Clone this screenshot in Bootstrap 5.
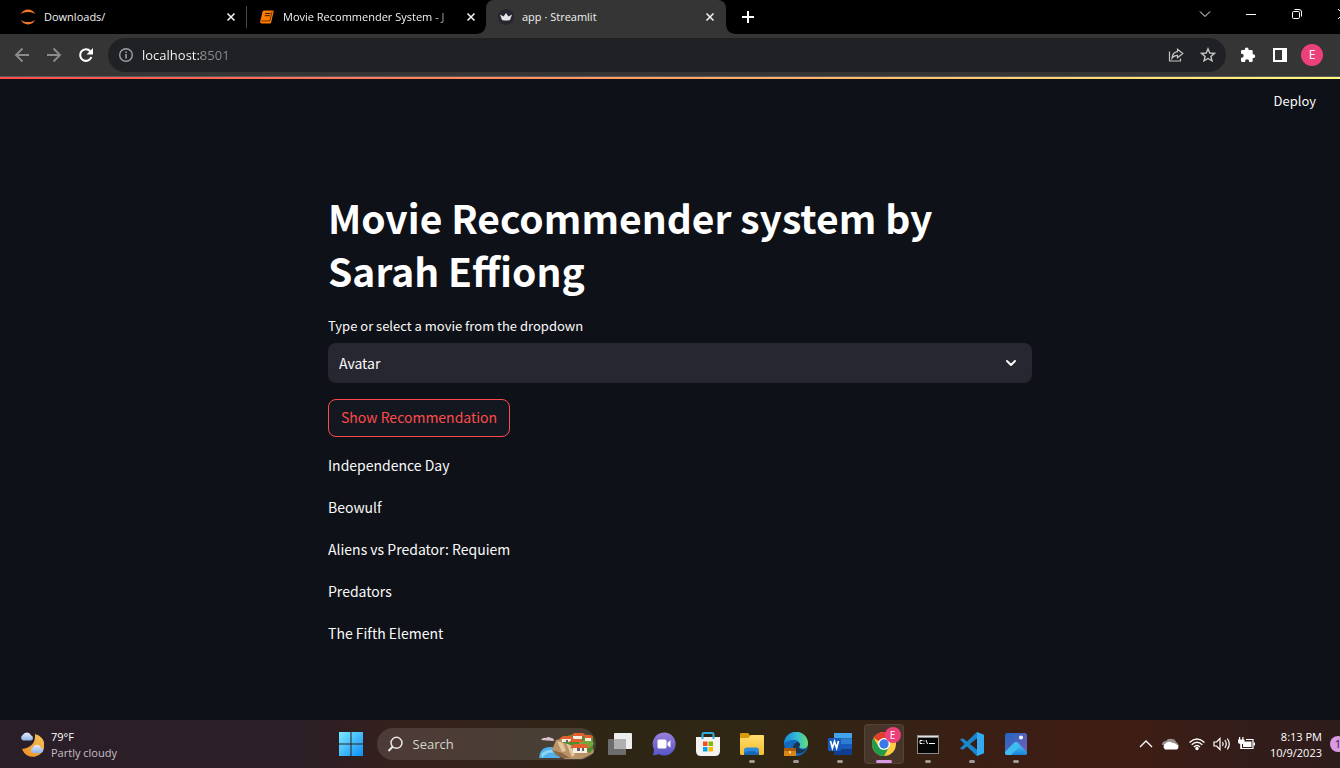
<!DOCTYPE html>
<html lang="en" data-bs-theme="dark">
<head>
<meta charset="utf-8">
<meta name="viewport" content="width=device-width, initial-scale=1">
<title>app · Streamlit</title>
<link href="https://cdn.jsdelivr.net/npm/bootstrap@5.3.0/dist/css/bootstrap.min.css" rel="stylesheet">
<style>
  body { background: #0e1117; overflow: hidden; font-family: "Open Sans", "Noto Sans", sans-serif; font-size: 12px; }
  svg { display: block; flex: none; }
  button { color: inherit; }
  /* the desktop runs slightly past the right edge of the viewport */
  .desktop { min-height: 100vh; margin-right: -26px; }

  /* browser tabs */
  .tabstrip { background: #000; height: 34px; padding-left: 8px; color: #f1f1f1; }
  .tab-item { width: 239px; padding: 0 7px 0 12px; gap: 8px; position: relative; }
  .tab-item.divided { border-right: 1px solid #4a4a4a; border-image: linear-gradient(transparent 7px, #4a4a4a 7px, #4a4a4a 27px, transparent 27px) 1; }
  .tab-item.current { background: #353535; border-radius: 8px 8px 0 0; width: 240px; padding-right: 8px; }
  .tab-item.current::before, .tab-item.current::after { content: ""; position: absolute; bottom: 0; width: 8px; height: 8px; }
  .tab-item.current::before { left: -8px; background: radial-gradient(circle at 0 0, transparent 7px, #353535 8px); }
  .tab-item.current::after { right: -8px; background: radial-gradient(circle at 100% 0, transparent 7px, #353535 8px); }
  .tab-name { color: inherit; text-decoration: none; font-size: 11px; line-height: 18px; overflow: hidden; white-space: nowrap; flex: 1 1 0; min-width: 0; }
  .tab-name.faded { -webkit-mask-image: linear-gradient(to right, #000 150px, transparent 176px); mask-image: linear-gradient(to right, #000 150px, transparent 176px); }
  .plain-btn { background: none; border: 0; padding: 0; display: flex; align-items: center; justify-content: center; flex: none; }
  .win-btn { width: 46px; height: 28px; }

  /* address bar */
  .toolbar { background: #353535; height: 43px; padding: 0 38px 0 6px; gap: 6px; border-bottom: 1px solid #59595b; }
  .nav-btn { width: 32px; height: 32px; }
  .omnibox { background: #202124; border-radius: 17px; height: 34px; padding: 0 2px 0 10px; gap: 8px; }
  .omnibox input { border: 0; outline: 0; padding: 0; font-size: 13px; line-height: 20px; min-width: 0; -webkit-text-fill-color: transparent; background: linear-gradient(to right, #fff 59px, #8b8d90 59px); -webkit-background-clip: text; background-clip: text; }
  .avatar { width: 22px; height: 22px; border-radius: 50%; background: #ec407a; color: #fff; font-size: 12px; }
  .rainbow { height: 2px; background: linear-gradient(90deg, #ff4b4b, #fffd80); }

  /* application */
  .app { font-family: "Noto Sans CJK SC", "Noto Sans", sans-serif; color: #fafafa; font-size: 14px; }
  .app-header { height: 44px; padding-right: 50px; }
  .app-header button { font-size: 13px; }
  .app-body { width: 704px; max-width: 100%; margin: 0 auto; padding-top: 68px; }
  .app-column { padding-right: 6px; }
  .app-body h1 { font-size: 39px; line-height: 53px; font-weight: 700; margin: 0 0 19px; }
  .app-body label { font-size: 13px; line-height: 20px; margin-bottom: 7px; display: block; }
  .form-select.movie-select { background-color: #262730; border: 0; border-radius: 8px; height: 40px; font-size: 14px; color: #fafafa; padding: 0 32px 0 11px; background-position: right 14px center; background-size: 14px 14px;
    background-image: url("data:image/svg+xml,%3csvg xmlns='http://www.w3.org/2000/svg' viewBox='0 0 14 14'%3e%3cpath fill='none' stroke='%23fafafa' stroke-width='2' stroke-linecap='round' stroke-linejoin='round' d='M3 5l4 4 4-4'/%3e%3c/svg%3e"); }
  .show-btn { --bs-btn-color: #ff4b4b; --bs-btn-border-color: #ff4b4b; --bs-btn-bg: #131720; --bs-btn-font-size: 14px; --bs-btn-border-radius: 8px; --bs-btn-hover-color: #ff4b4b; --bs-btn-hover-border-color: #ff4b4b; display: block; line-height: 24px; padding: 5px 12px 7px; margin: 16px 0 15px; }
  .app-body p { line-height: 26px; margin-bottom: 16px; }

  /* taskbar */
  .taskbar { display: grid; grid-template-columns: 1fr auto 1fr; height: 48px; color: #fff; font-size: 11px;
    background: linear-gradient(90deg, #2a1e28 0, #2c1e26 300px, #35201c 400px, #33241a 500px, #2e2615 620px, #302613 780px, #352215 880px, #3b1e14 1000px, #401d13 1120px, #351d19 1220px, #2d1c1c 1340px); }
  .weather { padding-left: 18px; gap: 7px; }
  .two-line { line-height: 16px; padding-top: 2px; }
  .weather .dim { color: #c6c0c5; }
  .search-pill { width: 219px; height: 32px; border-radius: 16px; background: rgba(255,255,255,.12); padding-left: 10px; margin: 0 4px 0 6px; overflow: hidden; gap: 9px; }
  .search-pill input { background: none; border: 0; outline: 0; padding: 1px 0 0; color: #d8d4d0; font-size: 13px; min-width: 0; width: 120px; }
  .search-pill input::placeholder { color: #d8d4d0; opacity: 1; }
  .task-btn { width: 40px; height: 40px; border-radius: 4px; position: relative; }
  .task-btn.running::after { content: ""; position: absolute; bottom: 1px; left: 17px; width: 6px; height: 3px; border-radius: 2px; background: #a09a94; }
  .task-btn.focused { background: rgba(255,255,255,.09); border: 1px solid rgba(255,255,255,.07); }
  .task-btn.focused::after { content: ""; position: absolute; bottom: 0; left: 11px; width: 16px; height: 3px; border-radius: 2px; background: #d99ae6; }
  .profile-dot { position: absolute; top: 2px; right: 2px; width: 16px; height: 16px; border-radius: 50%; background: #ec407a; font-size: 10px; line-height: 16px; text-align: center; color: #fff; }
  .tray { padding-right: 20px; }
  .clock { text-align: right; width: 64px; }
  .count-dot { width: 16px; height: 16px; border-radius: 50%; background: #d99ae6; color: #2b1b2e; line-height: 16px; text-align: center; margin-left: 8px; }
</style>
</head>
<body>
<div class="desktop d-flex flex-column">

  <nav class="tabstrip d-flex" aria-label="Tabs">
    <div class="tab-item divided d-flex align-items-center">
      <svg width="16" height="16" viewBox="0 0 16 16" fill="#f37726"><path d="M1 5.2C2 2.200 5 .6 8 .6s6 1.600 7 4.600C13.500 3.800 11 2.900 8 2.900S2.500 3.800 1 5.200z"/><path d="M1 10.800c1 3 4 4.600 7 4.600s6-1.600 7-4.600c-1.500 1.400-4 2.300-7 2.300s-5.500-.9-7-2.300z"/></svg>
      <a class="tab-name" href="#">Downloads/</a>
      <button class="plain-btn" aria-label="Close tab"><svg width="16" height="16" viewBox="0 0 16 16" stroke="#f1f1f1" stroke-width="1.600"><path d="M4.500 4.500l7 7m0-7l-7 7"/></svg></button>
    </div>
    <div class="tab-item d-flex align-items-center">
      <svg width="16" height="16" viewBox="0 0 16 16"><path d="M5 1.500h8.700q1.200 0 .9 1.200L12.300 13q-.3 1.500-1.600 1.500H2.600Q.8 14.500 1.200 12.500L3.500 2.700Q3.800 1.500 5 1.500z" fill="#ff7b00"/><path d="M6.300 4.500h5M5.800 6.700h5" stroke="#311700"/><path d="M2.600 11.900h8.200l2.300-9.400" stroke="#311700" stroke-width=".7" fill="none"/></svg>
      <a class="tab-name faded" href="#">Movie Recommender System - J</a>
      <button class="plain-btn" aria-label="Close tab"><svg width="16" height="16" viewBox="0 0 16 16" stroke="#f1f1f1" stroke-width="1.600"><path d="M4.500 4.500l7 7m0-7l-7 7"/></svg></button>
    </div>
    <div class="tab-item current d-flex align-items-center">
      <svg width="16" height="16" viewBox="0 0 16 16"><circle cx="8" cy="8" r="8" fill="#262730"/><path d="M2 5.500l3.500 2L8 4l2.500 3.500 3.500-2-2 5.500q-4 1-8 0z" fill="#e4e4e6"/></svg>
      <a class="tab-name" href="#" aria-current="page">app · Streamlit</a>
      <button class="plain-btn" aria-label="Close tab"><svg width="16" height="16" viewBox="0 0 16 16" stroke="#f1f1f1" stroke-width="1.600"><path d="M4.500 4.500l7 7m0-7l-7 7"/></svg></button>
    </div>
    <button class="plain-btn ms-3" aria-label="New tab"><svg width="12" height="12" viewBox="0 0 12 12" stroke="#fff" stroke-width="2"><path d="M6 0v12M0 6h12"/></svg></button>
    <div class="d-flex ms-auto">
      <button class="plain-btn win-btn" aria-label="Search tabs"><svg width="12" height="12" viewBox="0 0 12 12" fill="none" stroke="#fff"><path d="M1 3.500l5 5 5-5"/></svg></button>
      <button class="plain-btn win-btn" aria-label="Minimize"><svg width="10" height="10" viewBox="0 0 10 10"><path d="M0 5h10v1H0z" fill="#fff"/></svg></button>
      <button class="plain-btn win-btn" aria-label="Restore"><svg width="10" height="10" viewBox="0 0 10 10" fill="none" stroke="#fff"><rect x=".5" y="2.500" width="7" height="7" rx="1.200"/><path d="M2.500.5H7Q9.500.5 9.500 3v4.500"/></svg></button>
      <button class="plain-btn win-btn" aria-label="Close"><svg width="10" height="10" viewBox="0 0 10 10" stroke="#fff"><path d="M0 0l10 10M10 0L0 10"/></svg></button>
    </div>
  </nav>

  <div class="toolbar d-flex align-items-center">
    <div class="d-flex">
      <button class="plain-btn nav-btn" aria-label="Back"><svg width="16" height="16" viewBox="0 0 16 16" fill="none" stroke="#8b8b8b" stroke-width="1.900"><path d="M15 8H2M8.500 1.500L2 8l6.500 6.500"/></svg></button>
      <button class="plain-btn nav-btn" aria-label="Forward"><svg width="16" height="16" viewBox="0 0 16 16" fill="none" stroke="#8b8b8b" stroke-width="1.900"><path d="M1 8h13M7.500 1.500L14 8l-6.500 6.500"/></svg></button>
      <button class="plain-btn nav-btn" aria-label="Reload"><svg width="16" height="16" viewBox="0 0 16 16"><path d="M13.400 10A5.800 5.800 0 1 1 12.300 4.200" fill="none" stroke="#fff" stroke-width="2.100"/><path d="M15 1v6.500H8.500z" fill="#fff"/></svg></button>
    </div>
    <div class="omnibox d-flex align-items-center flex-grow-1">
      <svg width="16" height="16" viewBox="0 0 16 16"><circle cx="8" cy="8" r="6.300" fill="none" stroke="#9aa0a6" stroke-width="1.400"/><path d="M7.200 7h1.600v4.500H7.200zM7.200 4.400h1.600V6H7.200z" fill="#9aa0a6"/></svg>
      <input class="flex-grow-1" type="text" value="localhost:8501" aria-label="Address">
      <div class="d-flex">
        <button class="plain-btn nav-btn" aria-label="Share"><svg width="16" height="16" viewBox="0 0 16 16" fill="none" stroke="#c4c6c8" stroke-width="1.200"><path d="M1.500 4.500v9.500h11v-2.500"/><path d="M9.500 2.200L14.800 6.500 9.500 10.800V8.300Q6 8.300 4 11.200 4.500 5.200 9.500 4.700z"/></svg></button>
        <button class="plain-btn nav-btn" aria-label="Bookmark"><svg width="16" height="16" viewBox="0 0 16 16" fill="none" stroke="#c4c6c8" stroke-width="1.400"><path d="M8 1.800l1.800 4.200 4.600.4-3.500 3 1.100 4.500L8 11.500l-4 2.400 1.100-4.500-3.500-3L6.200 6z"/></svg></button>
      </div>
    </div>
    <div class="d-flex align-items-center">
      <button class="plain-btn nav-btn" aria-label="Extensions"><svg width="16" height="16" viewBox="0 0 16 16" fill="#fff"><path d="M13.300 7.300h-.6V4.200q0-1.200-1.200-1.200H8.600v-.7a1.900 1.900 0 0 0-3.800 0V3H2.200Q1 3 1 4.200v2.600h.7a2 2 0 0 1 0 4H1v2.900Q1 15 2.200 15h2.900v-.7a2 2 0 0 1 4 0v.7h2.400q1.200 0 1.200-1.200v-2.700h.6a1.900 1.900 0 0 0 0-3.800z"/></svg></button>
      <button class="plain-btn nav-btn" aria-label="Side panel"><svg width="14" height="14" viewBox="0 0 14 14"><path fill="#fff" fill-rule="evenodd" d="M0 0h14v14H0zM2 2v10h7V2z"/></svg></button>
      <button class="plain-btn nav-btn" aria-label="Profile"><span class="avatar d-flex align-items-center justify-content-center">E</span></button>
    </div>
  </div>

  <main class="app flex-grow-1">
    <div class="rainbow"></div>
    <header class="app-header d-flex align-items-center justify-content-end"><button class="plain-btn">Deploy</button></header>
    <div class="app-column">
      <div class="app-body">
        <h1>Movie Recommender system by Sarah Effiong</h1>
        <label for="movie">Type or select a movie from the dropdown</label>
        <select class="form-select movie-select" id="movie"><option>Avatar</option></select>
        <button class="btn show-btn" type="button">Show Recommendation</button>
        <p>Independence Day</p>
        <p>Beowulf</p>
        <p>Aliens vs Predator: Requiem</p>
        <p>Predators</p>
        <p>The Fifth Element</p>
      </div>
    </div>
  </main>

  <footer class="taskbar align-items-center">
    <div class="weather d-flex align-items-center">
      <svg width="26" height="26" viewBox="0 0 26 26"><defs><linearGradient id="moon" x1="1" y1="0" x2="0" y2="1"><stop offset="0" stop-color="#f2c75b"/><stop offset="1" stop-color="#f08a24"/></linearGradient><linearGradient id="cloud" x1="0" y1="0" x2="0" y2="1"><stop offset="0" stop-color="#e4effc"/><stop offset="1" stop-color="#8fb2ea"/></linearGradient></defs><path d="M17 3a11.500 11.500 0 1 1-13 15Q18 16 17 3z" fill="url(#moon)"/><path d="M5 9.500a3 3 0 0 1-.3-5.400 4.500 4.500 0 0 1 8.300.2 2.700 2.700 0 0 1 0 5.200z" fill="url(#cloud)"/><path d="M15 22a3 3 0 0 1-.3-5.500 4.500 4.500 0 0 1 8.300.2 2.700 2.700 0 0 1 0 5.300z" fill="url(#cloud)"/></svg>
      <div class="two-line"><div>79°F</div><div class="dim">Partly cloudy</div></div>
    </div>

    <div class="d-flex align-items-center">
      <button class="plain-btn task-btn" aria-label="Start"><svg width="24" height="24" viewBox="0 0 24 24"><defs><linearGradient id="win" x1="0" y1="0" x2="1" y2="1"><stop offset="0" stop-color="#7cebff"/><stop offset="1" stop-color="#0c8df5"/></linearGradient></defs><path d="M0 0h11.500v11.500H0zM12.500 0H24v11.500H12.500zM0 12.500h11.500V24H0zM12.500 12.500H24V24H12.500z" fill="url(#win)"/></svg></button>
      <div class="search-pill d-flex align-items-center">
        <svg width="17" height="17" viewBox="0 0 17 17" fill="none" stroke="#e8e6e4"><circle cx="9.500" cy="6.800" r="5.500" stroke-width="1.500"/><path d="M5.600 10.800L1.500 15" stroke-width="2"/></svg>
        <input type="search" placeholder="Search" aria-label="Search">
        <svg class="ms-auto" width="57" height="32" viewBox="0 0 57 32"><path d="M0 30Q1 18 13 19q6 2 8 11z" fill="#4fb0ea"/><path d="M2 26q6-5 13-4l2 3q-8-2-14 5z" fill="#8bd4f7"/><path d="M2 12q2-3 5-2 2-2 5 0 3 0 3 3z" fill="#d8c2cf"/><path d="M17 12l14-3 22 5 2 11-12 6H26L13 22z" fill="#b99267"/><path d="M18 13l6 2 3 8-4 1zM27 15l4 1 5 11-3 2z" fill="#e2c79d"/><path d="M13 22l10 3 8 5h-8l-6-3z" fill="#8a6a45"/><path d="M23 10q13-7 31-2v13l-3 4-14-6-14-5z" fill="#4f8d2f"/><path d="M40 14l12-4 3 6-5 4-10-2z" fill="#72a93a"/><path d="M23 11h9v3h-9zM34 8h9v3h-9zM34 19h14v6H34zM46 10h6v3h-6z" fill="#f6eee1"/><path d="M20 11l4-3h8l3 3zM32 8l3-3h9l3 3zM30 14l3-3h9l3 3zM31 20l4-4h12l4 4zM44 10l3-3h5l2 3z" fill="#e35f2d"/><path d="M38 20h3v3h-3zM43 20h2v3h-2zM27 12h2v2h-2z" fill="#655c6b"/></svg>
      </div>
      <div class="d-flex gap-1">
        <button class="plain-btn task-btn" aria-label="Task view"><svg width="24" height="22" viewBox="0 0 24 22"><rect x="6" y="0" width="18" height="16" rx="1" fill="#eee"/><rect x="0" y="6" width="18" height="16" rx="1" fill="#6d6d6d"/><path d="M6 6h12v10H6z" fill="#b0b0b0"/></svg></button>
        <button class="plain-btn task-btn" aria-label="Chat"><svg width="24" height="24" viewBox="0 0 24 24"><defs><linearGradient id="chat" x1="0" y1="0" x2="0" y2="1"><stop offset="0" stop-color="#9a80d8"/><stop offset="1" stop-color="#5656c8"/></linearGradient></defs><path d="M12 .5A11.500 11.500 0 1 1 7 22.300L1 23.500 2 17.500A11.500 11.500 0 0 1 12 .5z" fill="url(#chat)"/><rect x="5.500" y="7.500" width="9" height="9" rx="1.500" fill="#fff"/><path d="M15.500 10.800L18.500 8.300v7.400l-3-2.500z" fill="#fff"/></svg></button>
        <button class="plain-btn task-btn" aria-label="Store"><svg width="24" height="24" viewBox="0 0 24 24"><path d="M0 5h24v14q0 5-5 5H5q-5 0-5-5z" fill="#f5f3f2"/><path d="M6.500 7V2.500q0-1.500 1.500-1.500h8q1.500 0 1.500 1.500V7" fill="none" stroke="#2baee2" stroke-width="2"/><path fill="#f25022" d="M7 9.500h4.500V14H7z"/><path fill="#7fba00" d="M12.500 9.500H17V14h-4.500z"/><path fill="#00a4ef" d="M7 15h4.500v4.500H7z"/><path fill="#ffb900" d="M12.500 15H17v4.500h-4.500z"/></svg></button>
        <button class="plain-btn task-btn running" aria-label="File Explorer"><svg width="24" height="22" viewBox="0 0 24 22"><defs><linearGradient id="folder" x1="0" y1="0" x2="0" y2="1"><stop offset="0" stop-color="#ffdc70"/><stop offset="1" stop-color="#f8bd2c"/></linearGradient></defs><path d="M0 1q0-1 1-1h7l3 3h12v6H0z" fill="#d99a0a"/><path d="M0 5h8l3-3h12q1 0 1 1v17.500q0 1.500-1.500 1.500h-21Q0 22 0 20.500z" fill="url(#folder)"/><path d="M4 22v-4.500q0-3 3-3h9q3 0 3 3V22z" fill="#2b8ade"/><path d="M4 22v-2.500h15V22z" fill="#1769b5"/><path d="M7.500 19h8" stroke="#125293"/></svg></button>
        <button class="plain-btn task-btn running" aria-label="Edge"><svg width="24" height="25" viewBox="0 0 24 25"><defs><linearGradient id="edge" x1="0" y1="0" x2="1" y2="0"><stop offset="0" stop-color="#1686dc"/><stop offset=".55" stop-color="#35bdd7"/><stop offset="1" stop-color="#67df6b"/></linearGradient></defs><circle cx="12" cy="12" r="12" fill="#1469bd"/><path d="M0 12A12 12 0 0 1 24 11.500c0 3-2 5-5.500 5-3 0-4-1-3-2.500C17 11 14 8 10 8 5 8 1 10 0 12z" fill="url(#edge)"/><path d="M9 16q0-5 5-6 3 2 1.500 4c-1.500 3 2 4.500 7 2.500Q18 23 12 21q-3-2-3-5z" fill="#1b3550"/><path d="M0 16h12v8H0z" fill="#d98518"/><path d="M0 16h12v3H0z" fill="#a85b0c"/><path d="M5 19h2v2.500H5z" fill="#ffd36b"/></svg></button>
        <button class="plain-btn task-btn running" aria-label="Word"><svg width="24" height="22" viewBox="0 0 24 22"><path fill="#41a5ee" d="M6 0h18v5.500H6z"/><path fill="#2b7cd3" d="M6 5.500h18V11H6z"/><path fill="#185abd" d="M6 11h18v5.500H6z"/><path fill="#103f91" d="M6 16.500h18V22H6z"/><rect y="5" width="13" height="13" rx="1" fill="#185abd"/><path d="M2.500 8l1.900 7 2.100-6.500L8.600 15l1.900-7" fill="none" stroke="#fff" stroke-width="1.700"/></svg></button>
        <button class="plain-btn task-btn focused" aria-label="Chrome"><svg width="24" height="24" viewBox="0 0 24 24"><circle cx="12" cy="12" r="12" fill="#ffcd40"/><path d="M12 12L1.600 6A12 12 0 0 1 22.400 6H12z" fill="#e33b2e"/><path d="M1.600 6A12 12 0 0 0 12 24l5.200-9L12 12 6.800 15z" fill="#229b4b"/><circle cx="12" cy="12" r="6" fill="#fff"/><circle cx="12" cy="12" r="4.700" fill="#3b78e7"/></svg><span class="profile-dot">E</span></button>
        <button class="plain-btn task-btn running" aria-label="Command Prompt"><svg width="22" height="19" viewBox="0 0 22 19"><rect width="22" height="19" fill="#8c8c8c"/><path d="M1 3h20v15H1z" fill="#050505"/><path d="M1 1h20v1H1z" fill="#e0e0e0"/><path d="M5.500 5.500H3v3h2.500M7 5.500v1M7 8v1M9 5l1.500 4M12 8.500h6" stroke="#fff" fill="none"/></svg></button>
        <button class="plain-btn task-btn running" aria-label="Visual Studio Code"><svg width="24" height="24" viewBox="0 0 24 24"><path d="M17 0L7 9.500 2.700 6.200 0 7.500 4.500 12 0 16.500l2.700 1.300L7 14.500 17 24l1-5.500L10 12l8-6.500z" fill="#1b86cc"/><path d="M17 0l7 2.800v18.400L17 24z" fill="#35aaf0"/></svg></button>
        <button class="plain-btn task-btn running" aria-label="Photos"><svg width="22" height="22" viewBox="0 0 22 22"><defs><linearGradient id="sky" x1="0" y1="0" x2="1" y2="1"><stop offset="0" stop-color="#1e68c2"/><stop offset="1" stop-color="#7c5cb8"/></linearGradient><linearGradient id="hill" x1="0" y1="0" x2="0" y2="1"><stop offset="0" stop-color="#59cdf5"/><stop offset="1" stop-color="#1683dd"/></linearGradient></defs><rect width="22" height="22" rx="2" fill="url(#sky)"/><path d="M0 19l9-9q2-2 4 0l9 9v1q0 2-2 2H2q-2 0-2-2z" fill="url(#hill)"/><path d="M6 22l9-9-2-3q-2-2-4 0L0 19v1q0 2 2 2z" fill="#3fbcf0"/><circle cx="16" cy="4.500" r="2" fill="#fff"/></svg></button>
      </div>
    </div>

    <div class="tray d-flex align-items-center justify-content-end">
      <button class="plain-btn" aria-label="Hidden icons"><svg width="24" height="16" viewBox="0 0 24 16" fill="none" stroke="#fff" stroke-width="1.300"><path d="M6 11l6-6 6 6"/></svg></button>
      <svg width="26" height="16" viewBox="0 0 26 16"><path d="M4 9q0-4 4-4 2-3 6-2 3 0 4 3 2 1 3 4z" fill="#9a928f"/><path d="M7 13.500a3.500 3.500 0 0 1 .5-6 5 5 0 0 1 7-.5 4 4 0 0 1 4 1.500 2.700 2.700 0 0 1 .5 5z" fill="#fff"/></svg>
      <svg width="26" height="16" viewBox="0 0 26 16" fill="none" stroke="#fff" stroke-width="1.400"><path d="M5.500 6.500q7.500-7 15 0M7.700 8.800q5.300-5 10.600 0M10 11q3-2.800 6 0"/><circle cx="13" cy="12.500" r="1" fill="#fff"/></svg>
      <svg width="24" height="16" viewBox="0 0 24 16" fill="none" stroke="#fff" stroke-width="1.200"><path d="M4 6v4h2.500l3.500 3.500v-11L6.500 6z"/><path d="M12.500 6q1.500 2 0 4M14.800 4q3 4 0 8M17.300 2.500q4 5.500 0 11"/></svg>
      <svg width="24" height="16" viewBox="0 0 24 16"><path d="M7 8v4.500h12v-9h-7" fill="none" stroke="#fff" stroke-width="1.200"/><path d="M10 5.500h7.500v5.500H9V8zM19.500 6.500H21v3h-1.500zM4 3.500h6.500V6Q10.500 8 8 8v5H6.500V8Q4 8 4 6zM5 1h1.200v3H5zM8.300 1h1.200v3H8.300z" fill="#fff"/></svg>
      <div class="clock two-line"><div>8:13 PM</div><div>10/9/2023</div></div>
      <span class="count-dot">1</span>
    </div>
  </footer>
</div>
<script src="https://cdn.jsdelivr.net/npm/bootstrap@5.3.0/dist/js/bootstrap.bundle.min.js"></script>
</body>
</html>
